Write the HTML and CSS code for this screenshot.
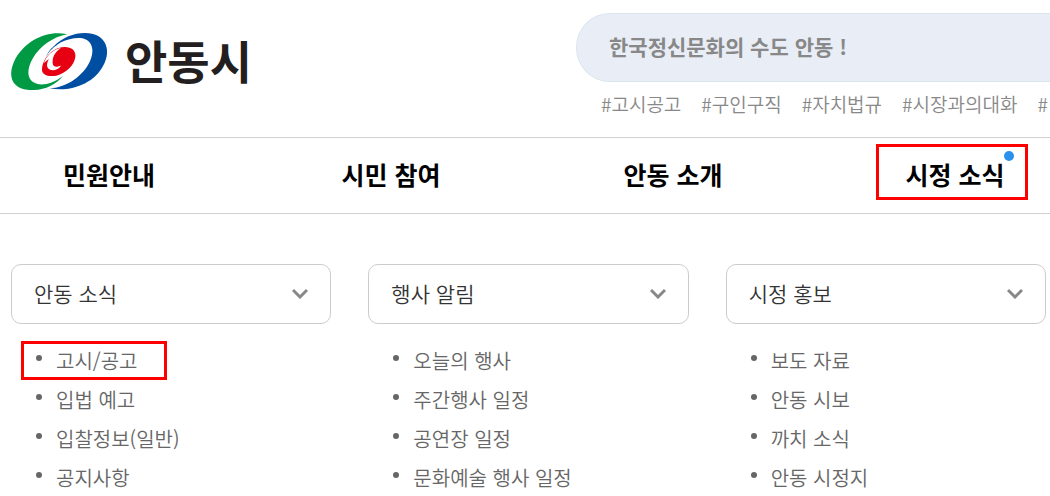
FILE: index.html
```html
<!DOCTYPE html>
<html lang="ko">
<head>
    <meta charset="UTF-8">
    <meta name="viewport" content="width=device-width, initial-scale=1.0">
    <title>안동시</title>
    <link rel="stylesheet" href="styles.css">
</head>
<body>
    <header class="header">
        <a href="#" class="logo">
            <svg class="logo-mark" viewBox="0 0 288 171" aria-hidden="true">
                <path fill="#009a44" d="M169 4C110-10 45 22 14 76C-14 128 2 168 55 171C95 173 132 159 156 128C132 148 100 158 80 153C48 146 44 112 66 75C88 38 126 12 169 4Z"/>
                <path fill="#004ea2" d="M104 74C114 54 130 40 150 28C170 18 195 13 214 16C249 24 252 60 231 96C210 132 165 164 116 166C180 178 248 152 276 99C300 56 288 14 246 3C206-6 160 8 129 39C116 50 108 62 104 74Z"/>
                <path fill="#fff" d="M98 84C112 54 150 24 190 20C160 30 134 46 116 72Z"/>
                <path fill="#e60012" d="M93 108C94 84 112 58 140 46C170 36 196 46 193 72C189 98 166 120 136 128C110 132 92 126 93 108Z"/>
                <path fill="#fff" d="M98 91C106 68 124 51 150 44C136 55 125 67 125 84C125 96 138 102 150 98C142 110 126 115 115 109C106 104 106 91 114 78C108 82 102 87 98 91Z"/>
                <circle cx="137" cy="89" r="12" fill="#e60012"/>
            </svg>
            <span class="logo-text">안동시</span>
        </a>
        <div class="search">
            <input type="text" class="search-input" aria-label="검색어" placeholder="한국정신문화의 수도 안동 !">
            <div class="tags">
                <a href="#">#고시공고</a>
                <a href="#">#구인구직</a>
                <a href="#">#자치법규</a>
                <a href="#">#시장과의대화</a>
                <a href="#">#</a>
            </div>
        </div>
    </header>

    <nav class="nav">
        <ul class="nav-list">
            <li><a href="#">민원안내</a></li>
            <li><a href="#">시민 참여</a></li>
            <li><a href="#">안동 소개</a></li>
            <li><a href="#" class="active">시정 소식<span class="dot"></span></a></li>
        </ul>
    </nav>

    <main class="menu">
        <section class="menu-col">
            <button type="button" class="menu-title">
                안동 소식
                <svg class="arrow" viewBox="0 0 16 12" aria-hidden="true"><path d="M1 3L8 10L15 3"/></svg>
            </button>
            <ul class="menu-list">
                <li class="marked"><a href="#">고시/공고</a></li>
                <li><a href="#">입법 예고</a></li>
                <li><a href="#">입찰정보(일반)</a></li>
                <li><a href="#">공지사항</a></li>
            </ul>
        </section>
        <section class="menu-col">
            <button type="button" class="menu-title">
                행사 알림
                <svg class="arrow" viewBox="0 0 16 12" aria-hidden="true"><path d="M1 3L8 10L15 3"/></svg>
            </button>
            <ul class="menu-list">
                <li><a href="#">오늘의 행사</a></li>
                <li><a href="#">주간행사 일정</a></li>
                <li><a href="#">공연장 일정</a></li>
                <li><a href="#">문화예술 행사 일정</a></li>
            </ul>
        </section>
        <section class="menu-col">
            <button type="button" class="menu-title">
                시정 홍보
                <svg class="arrow" viewBox="0 0 16 12" aria-hidden="true"><path d="M1 3L8 10L15 3"/></svg>
            </button>
            <ul class="menu-list">
                <li><a href="#">보도 자료</a></li>
                <li><a href="#">안동 시보</a></li>
                <li><a href="#">까치 소식</a></li>
                <li><a href="#">안동 시정지</a></li>
            </ul>
        </section>
    </main>
</body>
</html>
```
FILE: styles.css
```css
* {
    box-sizing: border-box;
}
body {
    margin: 0;
    font-family: "Noto Sans CJK KR", sans-serif;
    font-weight: 350;
    color: #333;
    background-color: #fff;
}
ul {
    list-style: none;
    margin: 0;
    padding: 0;
}
a {
    color: inherit;
    text-decoration: none;
}

/* header */
.header {
    display: flex;
    justify-content: space-between;
    padding: 13px 0 0 11px;
    height: 137px;
}
.logo {
    display: flex;
    align-items: center;
    gap: 18px;
    height: 97px;
}
.logo-mark {
    width: 96px;
    height: 57px;
}
.logo-text {
    padding-bottom: 4px;
    font-size: 46px;
    font-weight: 700;
    line-height: 57px;
    color: #231f20;
}
.search {
    width: 474px;
}
.search-input {
    display: block;
    width: 100%;
    height: 69px;
    padding: 0 32px 4px;
    border: 1px solid #dbe5ee;
    border-right: 0;
    border-radius: 34px 0 0 34px;
    background-color: #e9eef6;
    font-family: inherit;
    font-size: 21px;
    font-weight: 700;
}
.search-input::placeholder {
    color: #888;
}
.tags {
    display: flex;
    gap: 20px;
    margin-top: 8px;
    padding-left: 25px;
    font-size: 19px;
    line-height: 28px;
    white-space: nowrap;
    color: #888;
}

/* main navigation */
.nav {
    overflow: hidden;
    border-top: 1px solid #d0d0d0;
    border-bottom: 1px solid #d0d0d0;
}
.nav-list {
    display: grid;
    grid-template-columns: repeat(4, 1fr);
    margin: 0 -46px 0 -32px;
    padding-bottom: 3px;
    text-align: center;
    font-size: 25px;
    font-weight: 700;
    line-height: 72px;
    color: #000;
}
.nav-list a {
    display: inline-block;
    position: relative;
}
.nav-list .active::after {
    content: "";
    position: absolute;
    top: 6px;
    bottom: 10px;
    left: -29px;
    right: -23px;
    border: 3px solid #f00;
}
.dot {
    position: absolute;
    top: 13px;
    right: -9px;
    width: 10px;
    height: 10px;
    border-radius: 50%;
    background-color: #2a92ea;
}

/* sub menus */
.menu {
    display: grid;
    grid-template-columns: repeat(3, 1fr);
    gap: 37px;
    padding: 50px 4px 0 11px;
}
.menu-title {
    display: flex;
    align-items: center;
    justify-content: space-between;
    width: 100%;
    height: 60px;
    padding: 0 22px 2px;
    border: 1px solid #ccc;
    border-radius: 10px;
    background-color: #fff;
    font-family: inherit;
    font-size: 21px;
    font-weight: 350;
    color: #333;
    cursor: pointer;
}
.arrow {
    width: 16px;
    height: 12px;
    fill: none;
    stroke: #888;
    stroke-width: 3;
}
.menu-list {
    margin: 17px 0 0 10px;
    font-size: 20px;
    line-height: 39px;
    color: #666;
}
.menu-list li {
    position: relative;
    width: fit-content;
    padding: 0 30px 0 35px;
}
.menu-list li::before {
    content: "";
    position: absolute;
    top: 14px;
    left: 15px;
    width: 6px;
    height: 6px;
    border-radius: 50%;
    background-color: #666;
}
.menu-list .marked {
    box-shadow: inset 0 0 0 3px #f00;
}
```
